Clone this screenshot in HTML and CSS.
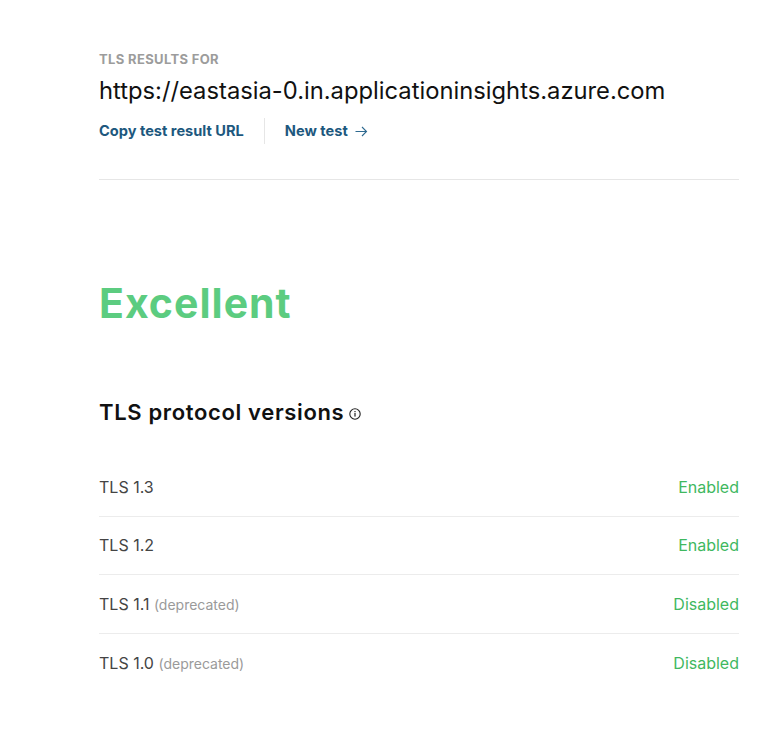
FILE: index.html
```html
<!DOCTYPE html>
<html>
<head>
<meta charset="utf-8">
<link rel="stylesheet" href="styles.css">
</head>
<body>
<main class="page">
  <header class="head">
    <div class="eyebrow">TLS RESULTS FOR</div>
    <h1 class="url">https://eastasia-0.in.applicationinsights.azure.com</h1>
    <div class="actions">
      <a class="action">Copy test result URL</a>
      <span class="divider"></span>
      <a class="action">New test <span class="arrow"><svg width="13" height="11" viewBox="0 0 13 11"><path d="M0.5 5.5h11.2M7 1l4.5 4.5L7 10" fill="none" stroke="currentColor" stroke-width="1.1"/></svg></span></a>
    </div>
  </header>
  <div class="grade">Excellent</div>
  <h2 class="section-title">TLS protocol versions <span class="info"><svg width="12" height="12" viewBox="0 0 12 12"><circle cx="6" cy="6" r="5.2" fill="none" stroke="currentColor" stroke-width="1.1"/><rect x="5.4" y="5" width="1.2" height="3.6" fill="currentColor"/><rect x="5.4" y="3" width="1.2" height="1.2" fill="currentColor"/></svg></span></h2>
  <ul class="rows">
    <li class="row"><span class="proto">TLS 1.3</span><span class="status">Enabled</span></li>
    <li class="row"><span class="proto">TLS 1.2</span><span class="status">Enabled</span></li>
    <li class="row"><span class="proto">TLS 1.1 <span class="dep">(deprecated)</span></span><span class="status">Disabled</span></li>
    <li class="row"><span class="proto">TLS 1.0 <span class="dep">(deprecated)</span></span><span class="status">Disabled</span></li>
  </ul>
</main>
</body>
</html>
```
FILE: styles.css
```css
html, body { margin: 0; padding: 0; background: #fff; }
body { font-family: Inter, "Noto Sans", sans-serif; color: #111; }
.page { width: 640px; margin-left: 99px; padding-top: 52px; }
.head { border-bottom: 1px solid #e6e6e6; padding-bottom: 35px; }
.eyebrow { font-size: 13px; font-weight: 700; color: #9c9c9c; letter-spacing: 0.35px; line-height: 15px; }
.url { margin: 9px 0 0; font-size: 23.75px; font-weight: 400; line-height: 30px; color: #111; }
.actions { display: flex; align-items: center; margin-top: 12px; height: 26px; }
.action { font-size: 14.6px; font-weight: 700; color: #1d587e; display: flex; align-items: center; gap: 7px; }
.divider { width: 1px; align-self: stretch; background: #e6e6e6; margin: 0 20px; }
.arrow { display: inline-flex; color: #2f6a90; }
.grade { margin-top: 98px; font-size: 41px; font-weight: 700; color: #5ccc80; line-height: 50px; letter-spacing: 1px; }
.section-title { margin: 70px 0 0; font-size: 22px; font-weight: 600; line-height: 28px; letter-spacing: 0.65px; display: flex; align-items: center; gap: 5px; color: #111; }
.info { display: inline-flex; color: #222; margin-top: 3px; }
.rows { list-style: none; margin: 32px 0 0; padding: 0; }
.row { display: flex; justify-content: space-between; align-items: center; height: 57.67px; border-bottom: 1px solid #ececec; font-size: 16px; color: #444; }
.row:last-child { border-bottom: none; }
.dep { font-size: 14px; color: #9a9a9a; }
.status { color: #3fb85f; }
```
